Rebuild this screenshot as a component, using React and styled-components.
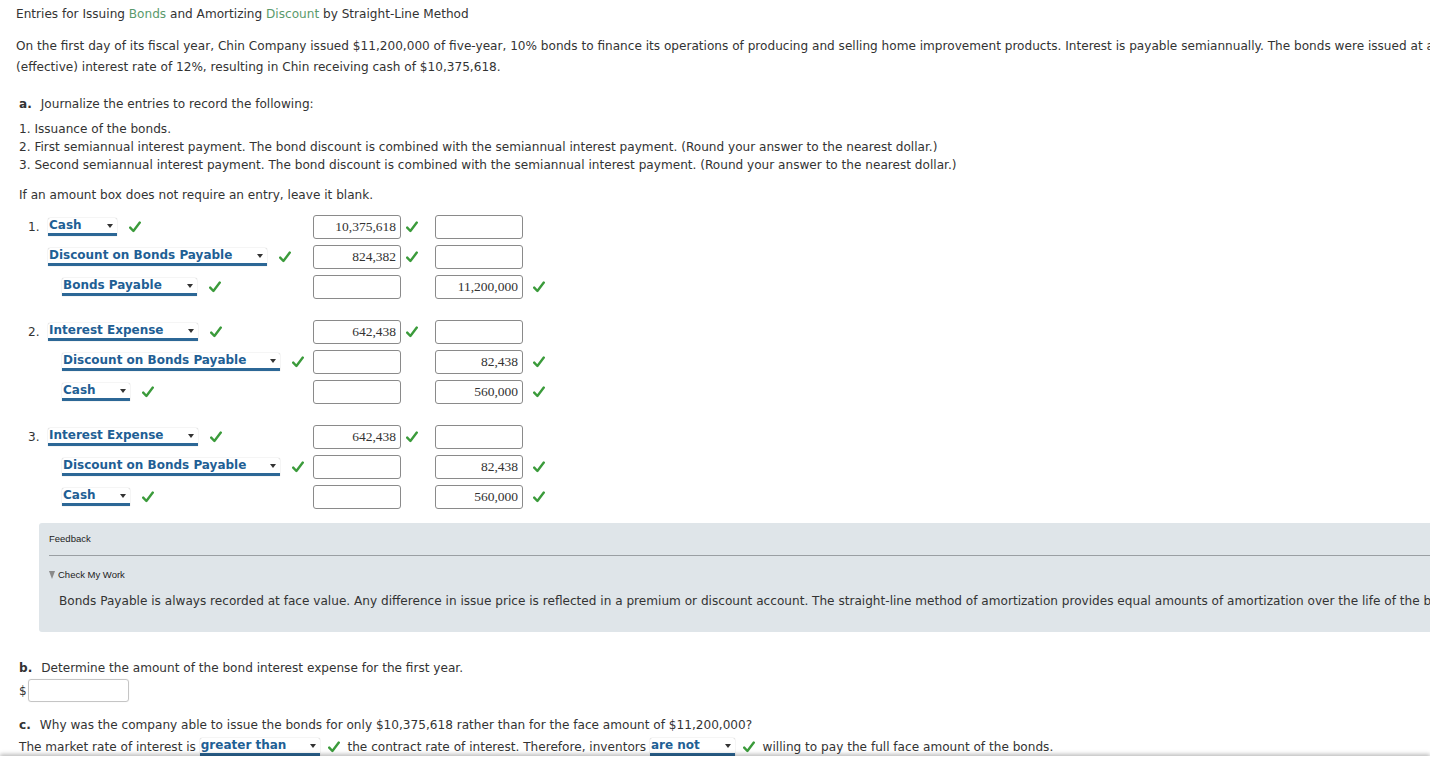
import React from 'react';
import styled, { createGlobalStyle } from 'styled-components';

const Global = createGlobalStyle`
  html, body {
    margin: 0;
    padding: 0;
    background: #ffffff;
    overflow: hidden;
  }
  body {
    font-family: 'DejaVu Sans', Verdana, sans-serif;
    font-size: 12.1px;
    color: #333333;
  }
`;

const Page = styled.div`
  width: 1600px;
  padding: 6px 0 0 16px;
`;

const Title = styled.div`
  line-height: 16px;
  margin-bottom: 14px;
`;

const Key = styled.span`
  color: #5a9a6c;
`;

const Intro = styled.p`
  margin: 0 0 17px 0;
  line-height: 21px;
  white-space: nowrap;
`;

const Part = styled.div`
  margin: 0 0 0 3px;
  line-height: 18px;
`;

const PartLetter = styled.b`
  color: #333;
  margin-right: 9px;
`;

const Steps = styled.ol`
  margin: 7px 0 12px 3px;
  padding: 0;
  list-style: none;
  line-height: 18px;
`;

const Hint = styled.div`
  margin: 0 0 11px 3px;
  line-height: 18px;
`;

const Journal = styled.div`
  display: flex;
  flex-direction: column;
  gap: 21px;
  margin-bottom: 14px;
`;

const Entry = styled.div`
  display: flex;
  flex-direction: column;
  gap: 6px;
`;

const Row = styled.div`
  display: grid;
  grid-template-columns: 297px 88px 34px 88px 22px;
  align-items: center;
  height: 24px;
`;

const Account = styled.div`
  display: flex;
  align-items: center;
  padding-left: ${p => (p.$credit ? 46 : 12)}px;
`;

const Num = styled.span`
  width: 20px;
  color: #333;
`;

const Select = styled.span`
  position: relative;
  display: inline-block;
  width: ${p => p.$w}px;
  height: 15px;
  line-height: 15px;
  font-weight: bold;
  color: #1f5f95;
  background: #fff;
  border-radius: 2px 2px 0 0;
  box-shadow: 0 0 1px 0 rgba(0, 0, 0, 0.4);
  border-bottom: 3px solid #2c6796;
  padding-left: 1px;
  box-sizing: content-box;
  white-space: nowrap;
  font-size: 12px;
  &::after {
    content: '';
    position: absolute;
    right: 4px;
    top: 6px;
    border-left: 3px solid transparent;
    border-right: 3px solid transparent;
    border-top: 4px solid #333;
  }
`;

const Check = styled.svg`
  width: 12px;
  height: 12px;
  margin-left: ${p => p.$gap ?? 7}px;
  flex: none;
`;

const Amount = styled.div`
  box-sizing: border-box;
  width: 88px;
  height: 24px;
  border: 1px solid #8a8a8a;
  border-radius: 3px;
  text-align: right;
  padding-right: 4px;
  font-family: 'Liberation Serif', 'Times New Roman', serif;
  font-size: 13.5px;
  line-height: 22px;
  color: #333;
`;

const CheckCell = styled.div`
  display: flex;
  align-items: center;
  padding-left: 5px;
`;

const Feedback = styled.div`
  margin-left: 23px;
  background: #dfe5e9;
  border-radius: 3px;
  padding: 10px 0 23px 10px;
  white-space: nowrap;
`;

const Small = styled.div`
  display: flex;
  align-items: center;
  font-family: 'Liberation Sans', Arial, sans-serif;
  font-size: 9.5px;
  color: #222;
  line-height: 12px;
`;

const Rule = styled.hr`
  border: none;
  border-top: 1px solid #9a9fa3;
  margin: 10px 0 13px 0;
`;

const Toggle = styled.span`
  display: inline-block;
  width: 0;
  height: 0;
  border-left: 3.5px solid transparent;
  border-right: 3.5px solid transparent;
  border-top: 8px solid #8a8a8a;
  margin-right: 3px;
`;

const FeedbackText = styled.div`
  margin: 12px 0 0 10px;
  line-height: 16px;
`;

const PartB = styled.div`
  margin: 27px 0 0 3px;
  line-height: 18px;
`;

const Dollar = styled.div`
  display: flex;
  align-items: center;
  margin: 2px 0 0 3px;
  gap: 1px;
  font-size: 12px;
`;

const Blank = styled.div`
  width: 101px;
  height: 23px;
  box-sizing: border-box;
  border: 1px solid #c5c5c5;
  border-radius: 3px;
  box-shadow: 0 0 1px rgba(0, 0, 0, 0.15);
`;

const PartC = styled.div`
  margin: 12px 0 0 3px;
  line-height: 22px;
  white-space: nowrap;
`;

const Inline = styled.div`
  display: flex;
  align-items: center;
  margin-left: 3px;
  white-space: nowrap;
  line-height: 22px;
`;

const Footer = styled.div`
  position: fixed;
  left: 0;
  right: 0;
  bottom: 0;
  height: 16px;
  background: #fff;
  box-shadow: 0 -2px 4px rgba(0, 0, 0, 0.25);
`;

const Tick = ({ gap }) => (
  <Check $gap={gap} viewBox="0 0 12 12">
    <path d="M1.2 6.6 L4.4 10 L10.8 1.6" fill="none" stroke="#3b9b3b" strokeWidth="2.4" strokeLinejoin="round" strokeLinecap="round" />
  </Check>
);

const entries = [
  {
    n: '1.',
    rows: [
      { name: 'Cash', w: 68, dr: '10,375,618' },
      { name: 'Discount on Bonds Payable', w: 218, dr: '824,382' },
      { name: 'Bonds Payable', w: 134, cr: '11,200,000', credit: true },
    ],
  },
  {
    n: '2.',
    rows: [
      { name: 'Interest Expense', w: 149, dr: '642,438' },
      { name: 'Discount on Bonds Payable', w: 217, cr: '82,438', credit: true },
      { name: 'Cash', w: 67, cr: '560,000', credit: true },
    ],
  },
  {
    n: '3.',
    rows: [
      { name: 'Interest Expense', w: 149, dr: '642,438' },
      { name: 'Discount on Bonds Payable', w: 217, cr: '82,438', credit: true },
      { name: 'Cash', w: 67, cr: '560,000', credit: true },
    ],
  },
];

export default function App() {
  return (
    <Page>
      <Global />
      <Title>
        Entries for Issuing <Key>Bonds</Key> and Amortizing <Key>Discount</Key> by Straight-Line Method
      </Title>
      <Intro>
        On the first day of its fiscal year, Chin Company issued $11,200,000 of five-year, 10% bonds to finance its operations of producing and selling home improvement products. Interest is payable semiannually. The bonds were issued at a market
        <br />
        (effective) interest rate of 12%, resulting in Chin receiving cash of $10,375,618.
      </Intro>

      <Part>
        <PartLetter>a.</PartLetter>Journalize the entries to record the following:
      </Part>
      <Steps>
        <li>1. Issuance of the bonds.</li>
        <li>2. First semiannual interest payment. The bond discount is combined with the semiannual interest payment. (Round your answer to the nearest dollar.)</li>
        <li>3. Second semiannual interest payment. The bond discount is combined with the semiannual interest payment. (Round your answer to the nearest dollar.)</li>
      </Steps>
      <Hint>If an amount box does not require an entry, leave it blank.</Hint>

      <Journal>
        {entries.map(e => (
          <Entry key={e.n}>
            {e.rows.map((r, i) => (
              <Row key={i}>
                <Account $credit={r.credit && i > 0}>
                  {i === 0 ? <Num>{e.n}</Num> : !r.credit ? <Num /> : null}
                  <Select $w={r.w}>{r.name}</Select>
                  <Tick gap={12} />
                </Account>
                <Amount>{r.dr || ''}</Amount>
                <CheckCell>{r.dr && <Tick gap={0} />}</CheckCell>
                <Amount>{r.cr || ''}</Amount>
                <CheckCell>{r.cr && <Tick gap={5} />}</CheckCell>
              </Row>
            ))}
          </Entry>
        ))}
      </Journal>

      <Feedback>
        <Small>Feedback</Small>
        <Rule />
        <Small>
          <Toggle />Check My Work
        </Small>
        <FeedbackText>
          Bonds Payable is always recorded at face value. Any difference in issue price is reflected in a premium or discount account. The straight-line method of amortization provides equal amounts of amortization over the life of the bonds.
        </FeedbackText>
      </Feedback>

      <PartB>
        <PartLetter>b.</PartLetter>Determine the amount of the bond interest expense for the first year.
      </PartB>
      <Dollar>
        $<Blank />
      </Dollar>

      <PartC>
        <PartLetter>c.</PartLetter>Why was the company able to issue the bonds for only $10,375,618 rather than for the face amount of $11,200,000?
      </PartC>
      <Inline>
        The market rate of interest is&nbsp;<Select $w={119}>greater than</Select>
        <Tick gap={8} />
        &nbsp;&nbsp;the contract rate of interest. Therefore, inventors&nbsp;<Select $w={84}>are not</Select>
        <Tick gap={8} />
        &nbsp;&nbsp;willing to pay the full face amount of the bonds.
      </Inline>
      <Footer />
    </Page>
  );
}
